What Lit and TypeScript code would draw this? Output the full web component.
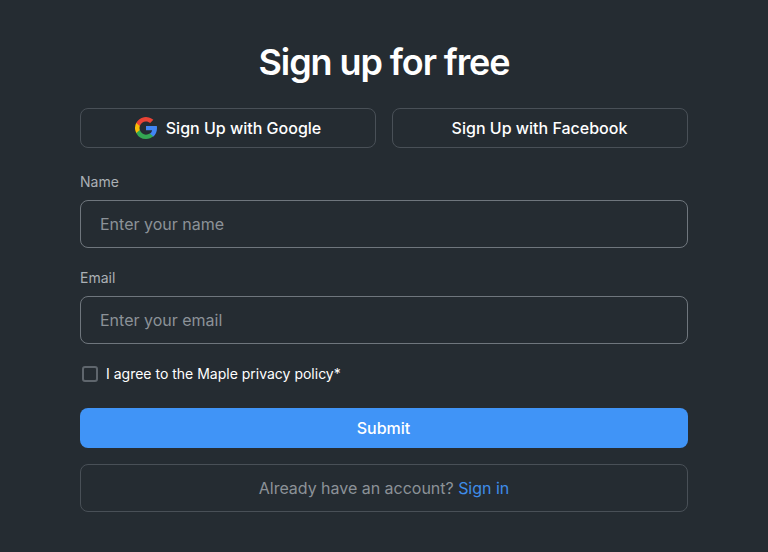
import { LitElement, html, css } from "lit";
import { customElement } from "lit/decorators.js";

@customElement("app-root")
export class AppRoot extends LitElement {
  static styles = css`
    :host {
      display: block;
      box-sizing: border-box;
      height: 552px;
      padding: 40px 80px;
      background: #252c32;
      color: #fff;
      font-family: Inter, sans-serif;
    }
    * { box-sizing: border-box; }
    form { display: flex; flex-direction: column; }
    h1 {
      margin: 0 0 24px;
      font-size: 36px;
      line-height: 44px;
      font-weight: 600;
      letter-spacing: -1.1px;
      text-align: center;
    }
    .providers { display: grid; grid-template-columns: 1fr 1fr; gap: 16px; margin-bottom: 24px; }
    button { font: inherit; color: inherit; cursor: pointer; }
    .provider {
      display: flex;
      align-items: center;
      justify-content: center;
      gap: 8px;
      height: 40px;
      padding: 0 1px 0 0;
      border: 1px solid #495057;
      border-radius: 8px;
      background: transparent;
      font-size: 16px;
      font-weight: 500;
    }
    .provider svg { width: 24px; height: 24px; }
    .field { display: flex; flex-direction: column; margin-bottom: 20px; }
    .label { font-size: 14px; line-height: 20px; height: 28px; color: #abb0b5; }
    input.text {
      height: 48px;
      padding: 0 19px;
      border: 1px solid #6f767d;
      border-radius: 8px;
      background: transparent;
      color: #fff;
      font: 400 16px/24px Inter, sans-serif;
      outline: none;
    }
    input.text::placeholder { color: #8c9298; opacity: 1; }
    .agree { display: flex; align-items: center; height: 20px; margin-bottom: 24px; font-size: 14px; line-height: 20px; }
    .box { appearance: none; width: 16px; height: 16px; margin: 0 8px 0 2px; border: 2px solid #5f666d; border-radius: 3px; }
    .agree span { height: 20px; margin-top: -1px; }
    .submit { height: 40px; margin-bottom: 16px; padding: 0 1px 0 0; border: 0; border-radius: 8px; background: #4094f7; font-size: 16px; font-weight: 500; }
    .signin { height: 48px; border: 1px solid #495057; border-radius: 8px; line-height: 46px; text-align: center; font-size: 16px; letter-spacing: -0.02px; color: #8c9298; }
    .signin a { color: #3f8de9; text-decoration: none; }
  `;

  render() {
    return html`
      <form>
        <h1>Sign up for free</h1>
        <div class="providers">
          <button type="button" class="provider">
            <svg viewBox="0 0 24 24" aria-hidden="true">
              <path fill="#4285f4" d="M23 12.25c0-.78-.07-1.53-.2-2.25H12v4.26h6.18a5.3 5.3 0 0 1-2.29 3.47v2.77h3.57C21.56 18.58 23 15.68 23 12.25z"/>
              <path fill="#34a853" d="M12 23c2.97 0 5.46-.98 7.28-2.66l-3.57-2.77c-.98.66-2.23 1.06-3.71 1.06-2.86 0-5.29-1.93-6.16-4.53H2.18v2.84A11 11 0 0 0 12 23z"/>
              <path fill="#fbbc05" d="M5.84 14.09a6.6 6.6 0 0 1 0-4.18V7.07H2.18a11 11 0 0 0 0 9.86z"/>
              <path fill="#ea4335" d="M12 5.38c1.62 0 3.06.56 4.21 1.64l3.15-3.15A11 11 0 0 0 2.18 7.07l3.66 2.84C6.71 7.31 9.14 5.38 12 5.38z"/>
            </svg>
            <span>Sign Up with Google</span>
          </button>
          <button type="button" class="provider">Sign Up with Facebook</button>
        </div>
        <label class="field">
          <span class="label">Name</span>
          <input class="text" type="text" placeholder="Enter your name" />
        </label>
        <label class="field">
          <span class="label">Email</span>
          <input class="text" type="email" placeholder="Enter your email" />
        </label>
        <label class="agree"><input class="box" type="checkbox" /><span>I agree to the Maple privacy policy*</span></label>
        <button type="button" class="submit">Submit</button>
        <div class="signin">Already have an account? <a href="#">Sign in</a></div>
      </form>
    `;
  }
}
